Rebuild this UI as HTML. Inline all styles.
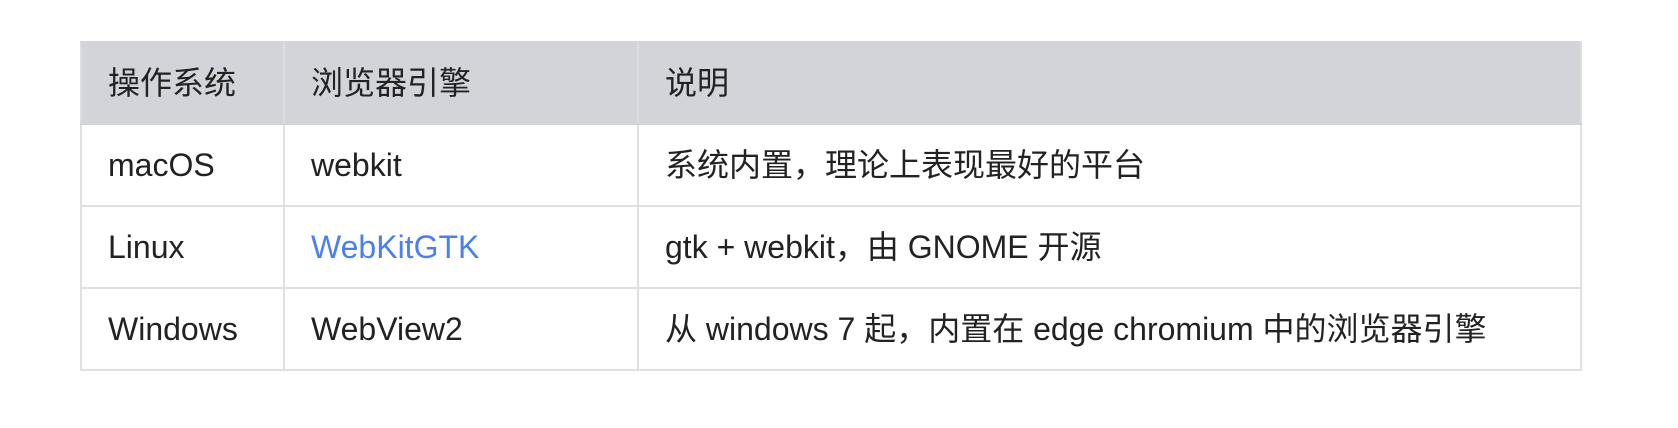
<!DOCTYPE html>
<html><head><meta charset="utf-8"><style>
body{margin:0;background:#fff;width:1678px;height:428px;overflow:hidden;font-family:"Liberation Sans","Noto Sans CJK SC",sans-serif;color:#222;}
table{position:absolute;left:80px;top:41px;width:1502px;border-collapse:collapse;font-size:32px;line-height:1;}
td,th{border:2px solid #dfe0e4;padding:0 0 0 26px;height:80px;text-align:left;font-weight:normal;}
th{background:#d3d4d9;border-color:#d3d4d9 #dcdde1;}
a{color:#4a7ff0;text-decoration:none}
</style></head><body>
<table>
<colgroup><col style="width:203px"><col style="width:354px"><col></colgroup>
<tr><th>操作系统</th><th>浏览器引擎</th><th>说明</th></tr>
<tr><td>macOS</td><td>webkit</td><td>系统内置，理论上表现最好的平台</td></tr>
<tr><td>Linux</td><td><a>WebKitGTK</a></td><td>gtk + webkit，由 GNOME 开源</td></tr>
<tr><td>Windows</td><td>WebView2</td><td>从 windows 7 起，内置在 edge chromium 中的浏览器引擎</td></tr>
</table>
</body></html>
